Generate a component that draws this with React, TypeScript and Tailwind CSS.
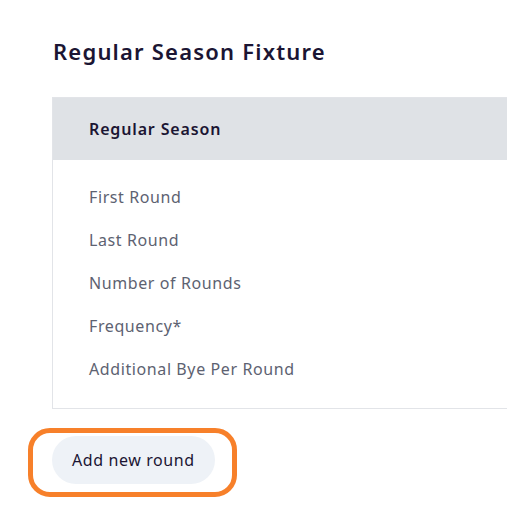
import React from "react";

const rows = ["First Round", "Last Round", "Number of Rounds", "Frequency*", "Additional Bye Per Round"];

export default function App() {
  return (
    <div className="w-[507px] h-[529px] overflow-hidden bg-white" style={{ fontFamily: '"Noto Sans", sans-serif' }}>
      <div className="pl-[52px] pt-[36px]">
        <h1 className="text-[22px] leading-[30px] font-semibold text-[#1b1533] pl-[1px] tracking-[1.2px]">Regular Season Fixture</h1>
        <div className="mt-[31px] w-[600px] border border-[#e2e4e8]">
          <div className="h-[62px] bg-[#dfe2e6] flex items-center pl-[36px] pb-[1px] text-[16px] font-semibold text-[#1b1533] tracking-[0.85px]">
            Regular Season
          </div>
          <div className="pt-[16px] pb-[18px] pl-[36px] flex flex-col">
            {rows.map((r) => (
              <div key={r} className="h-[42.8px] flex items-center text-[16px] text-[#5d6271] tracking-[0.6px]">{r}</div>
            ))}
          </div>
        </div>
        <div className="relative mt-[27px] w-fit">
          <button className="h-[48px] px-[20px] rounded-full bg-[#eef2f7] text-[16px] text-[#1b1533] tracking-[0.6px]">Add new round</button>
          <div className="absolute left-[-24px] top-[-8px] w-[209px] h-[69px] border-[5px] border-[#f7802a] rounded-[22px]" />
        </div>
      </div>
    </div>
  );
}
